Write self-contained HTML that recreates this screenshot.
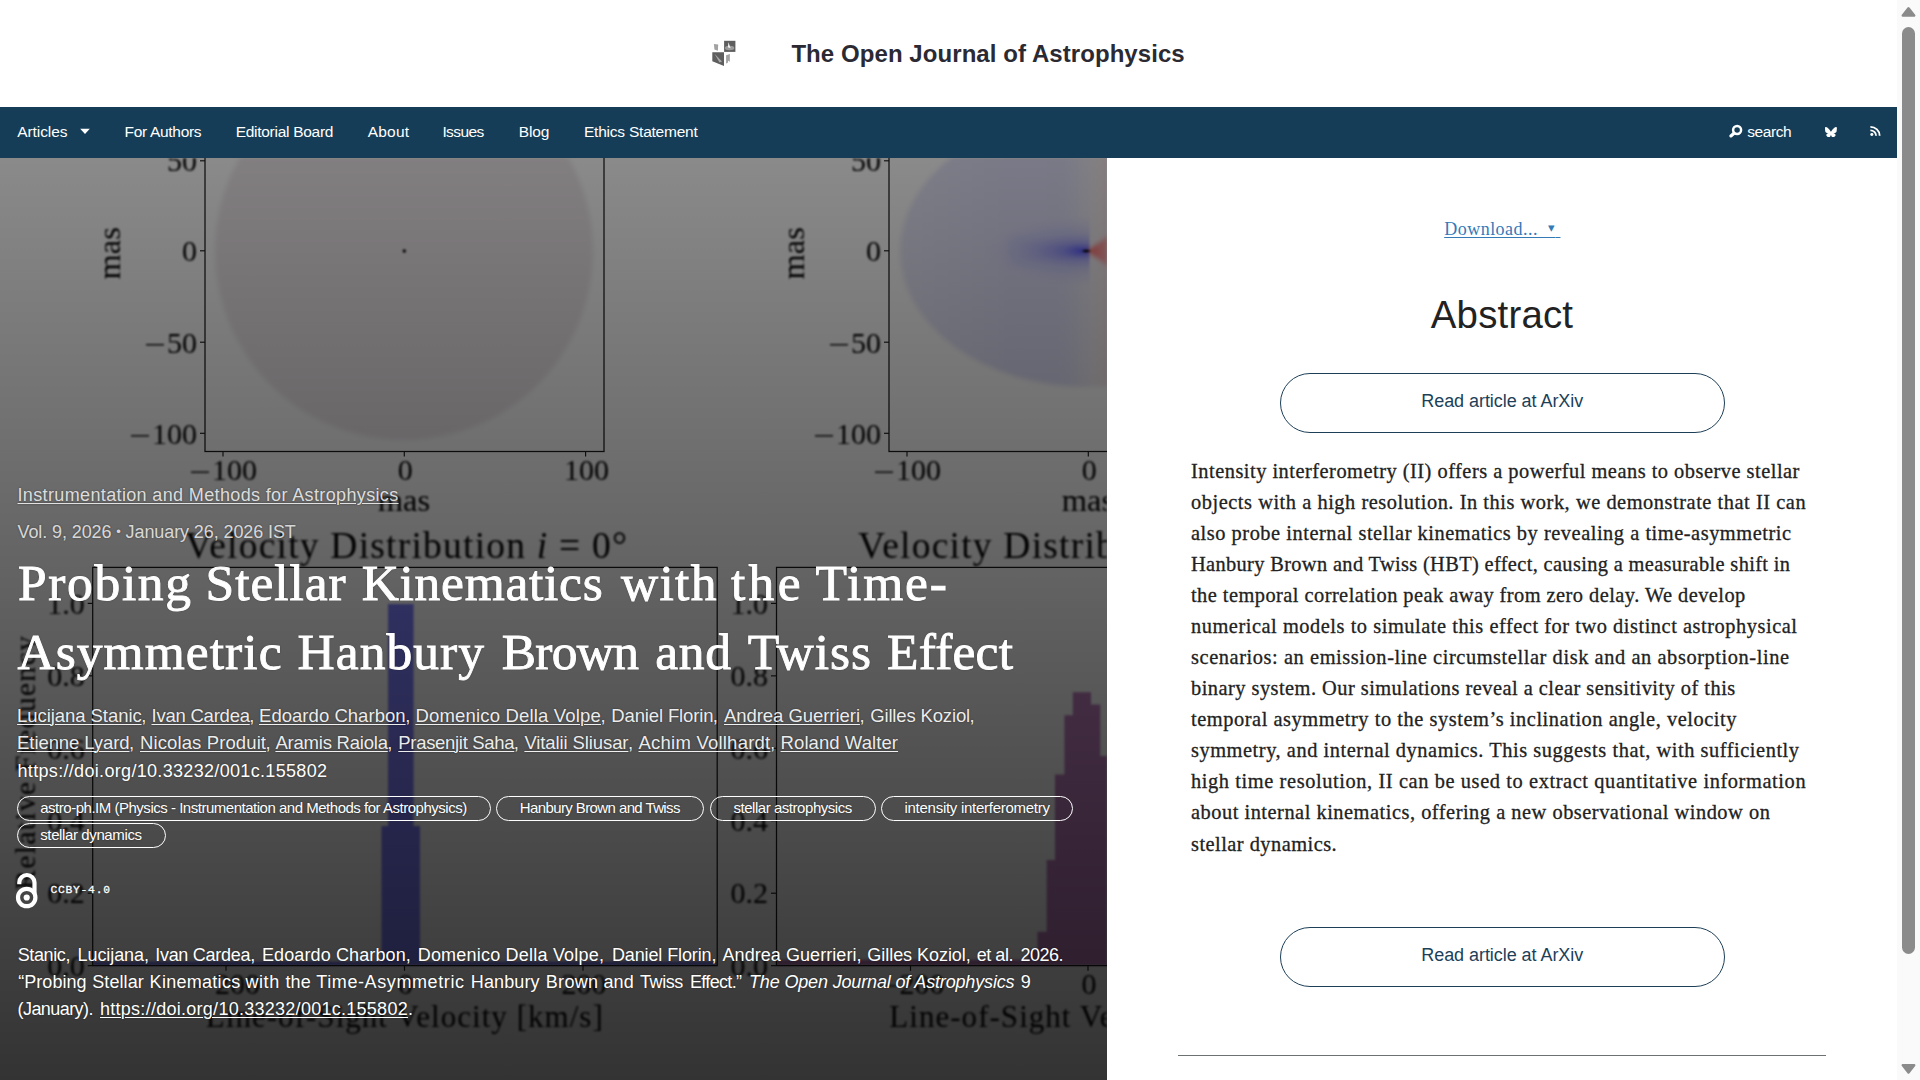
<!DOCTYPE html>
<html lang="en"><head><meta charset="utf-8"><title>Probing Stellar Kinematics with the Time-Asymmetric Hanbury Brown and Twiss Effect | The Open Journal of Astrophysics</title>
<style>
html,body{margin:0;padding:0;background:#fff;}
body{width:1920px;height:1080px;position:relative;overflow:hidden;font-family:'Liberation Sans',sans-serif;}
.t{position:absolute;white-space:nowrap;margin:0;padding:0;}
.sfx{position:absolute;left:100%;top:0;margin-left:-.5px}
.t u{text-decoration:underline;text-decoration-thickness:1px;text-underline-offset:2px;}
#nav{position:absolute;left:0;top:107px;width:1897px;height:51px;background:#153d57;}
#hero{position:absolute;left:0;top:158px;width:1107px;height:922px;overflow:hidden;background:#fff;}
#ov{position:absolute;left:0;top:0;width:1107px;height:922px;background:linear-gradient(to bottom,rgba(0,0,0,.46) 0%,rgba(0,0,0,.80) 100%);}
.pill{position:absolute;box-sizing:border-box;border:1px solid #fff;border-radius:13px;height:25px;}
.btn{position:absolute;box-sizing:border-box;border:1px solid #1d3f58;border-radius:30px;left:1280px;width:444.5px;height:60px;background:#fff;}
#sb{position:absolute;left:1897px;top:0;width:23px;height:1080px;background:#fafafa;}
#thumb{position:absolute;left:1902px;top:27px;width:13px;height:927px;border-radius:6.5px;background:#8b8b8b;}
#hr{position:absolute;left:1178px;top:1054.5px;width:648px;height:1px;background:#6c7272;}
</style></head><body>
<svg id="logo" style="position:absolute;left:700px;top:30px" width="50" height="45" viewBox="700 30 50 45">
<rect x="724.1" y="40.8" width="11.3" height="11.1" fill="#5e5e5e"/>
<ellipse cx="729.6" cy="48" rx="4.7" ry="2.2" fill="#9a9a9a"/>
<path d="M728.4 42.2 L730.6 48.2 L727.9 47.2 Z" fill="#f4f4f4"/>
<path d="M712.3 52.3 L724 52.3 L724 66 L712.3 61.2 Z" fill="#5e5e5e"/>
<path d="M714.5 53.8 L722 61.5 L719.5 62.6 Z" fill="#a8a8a8"/>
<path d="M713.9 43.9 L718.2 44.6 L717.9 50.8 L714.4 49.6 Z" fill="#a2a2a2"/>
<path d="M726.1 55.2 L729.9 54 L729.8 62 L728.4 60.5 L727.6 63 L726.1 63.6 Z" fill="#a2a2a2"/>
</svg>
<div id="nav"></div>
<svg style="position:absolute;left:79px;top:127px" width="12" height="8" viewBox="0 0 12 8"><path d="M1.2 1.7 L10.8 1.7 L6 7 Z" fill="#fff"/></svg>
<svg style="position:absolute;left:1727px;top:122px" width="18" height="18" viewBox="1727 122 18 18"><circle cx="1737.1" cy="130" r="4" fill="none" stroke="#fff" stroke-width="2.5"/><path d="M1734 133.3 L1730.9 135.9" stroke="#fff" stroke-width="3.2" stroke-linecap="round"/></svg>
<svg style="position:absolute;left:1824.9px;top:126.5px" width="11.9" height="10.4" viewBox="0 0 64 57" preserveAspectRatio="none"><path fill="#fff" d="M13.87 3.8C21.21 9.32 29.1 20.5 32 26.5c2.9-6 10.79-17.18 18.13-22.7C55.42-.17 64-3.25 64 6.55c0 1.96-1.12 16.44-1.78 18.79-2.28 8.17-10.61 10.25-18.02 8.99 12.95 2.2 16.25 9.5 9.13 16.81-13.51 13.87-19.42-3.48-20.94-7.92-.28-.82-.41-1.2-.41-.87 0-.33-.13.05-.41.87-1.52 4.44-7.43 21.79-20.94 7.92-7.12-7.31-3.82-14.61 9.13-16.81-7.41 1.26-15.74-.82-18.02-8.99C1.12 22.99 0 8.51 0 6.55 0-3.25 8.58-.17 13.87 3.8z"/></svg>
<svg style="position:absolute;left:1869.8px;top:126px" width="11.6" height="10.2" viewBox="0 0 12 11" preserveAspectRatio="none"><circle cx="1.9" cy="9.2" r="1.6" fill="#fff"/><path d="M0.4 4.6 A5.9 5.9 0 0 1 6.3 10.5" fill="none" stroke="#fff" stroke-width="1.9"/><path d="M0.4 1 A9.6 9.6 0 0 1 10 10.5" fill="none" stroke="#fff" stroke-width="1.9"/></svg>
<div id="hero">
<svg id="fig" width="1107" height="922" viewBox="0 158 1107 922" style="position:absolute;left:0;top:0;filter:blur(.8px)">
<defs>
<radialGradient id="gb" gradientUnits="userSpaceOnUse" cx="0" cy="0" r="100" gradientTransform="translate(1083 251) scale(1 .36)">
<stop offset="0" stop-color="#5a5aff"/><stop offset="0.07" stop-color="#6c6cff" stop-opacity=".9"/><stop offset="0.22" stop-color="#8888ff" stop-opacity=".6"/><stop offset="0.5" stop-color="#a0a0ff" stop-opacity=".3"/><stop offset="1" stop-color="#c0c0ff" stop-opacity="0"/>
</radialGradient>
<linearGradient id="gbase" gradientUnits="userSpaceOnUse" x1="900" y1="0" x2="1107" y2="0">
<stop offset="0" stop-color="#e9e9fb"/><stop offset="0.55" stop-color="#e0e0fa"/><stop offset="0.8" stop-color="#e1e1f9"/><stop offset="0.9" stop-color="#ebe9f4"/><stop offset="0.95" stop-color="#f2ecf0"/><stop offset="1" stop-color="#f4e4e8"/>
</linearGradient>
<radialGradient id="gr" gradientUnits="userSpaceOnUse" cx="0" cy="0" r="40" gradientTransform="translate(1097 251) scale(1 .5)">
<stop offset="0" stop-color="#ff6464"/><stop offset="0.3" stop-color="#ff8484" stop-opacity=".85"/><stop offset="0.65" stop-color="#ffa8a8" stop-opacity=".4"/><stop offset="1" stop-color="#ffd0d0" stop-opacity="0"/>
</radialGradient>
<clipPath id="cl"><rect x="889" y="100" width="230" height="352"/></clipPath>
<clipPath id="cb"><rect x="889" y="100" width="200.5" height="352"/></clipPath>
<clipPath id="cr"><rect x="1089.5" y="100" width="30" height="352"/></clipPath>
<linearGradient id="lgb" gradientUnits="userSpaceOnUse" x1="1089" y1="0" x2="990" y2="0">
<stop offset="0" stop-color="#4a4aff"/><stop offset="0.12" stop-color="#6464ff" stop-opacity=".95"/><stop offset="0.4" stop-color="#8484ff" stop-opacity=".6"/><stop offset="1" stop-color="#b4b4ff" stop-opacity="0"/>
</linearGradient>
<linearGradient id="lgr" gradientUnits="userSpaceOnUse" x1="1088" y1="0" x2="1112" y2="0">
<stop offset="0" stop-color="#ff6060"/><stop offset="0.5" stop-color="#ff8c8c" stop-opacity=".9"/><stop offset="1" stop-color="#ffb0b0" stop-opacity=".7"/>
</linearGradient>
<filter id="soft3" x="-30%" y="-60%" width="160%" height="220%"><feGaussianBlur stdDeviation="5"/></filter>
<filter id="soft2" x="-40%" y="-40%" width="180%" height="180%"><feGaussianBlur stdDeviation="2"/></filter>
<filter id="soft" x="-10%" y="-10%" width="120%" height="120%"><feGaussianBlur stdDeviation="2.2"/></filter>
</defs>
<rect x="0" y="158" width="1107" height="922" fill="#fff"/>
<circle cx="404" cy="251" r="189" fill="#f0eaee" filter="url(#soft)"/>
<g clip-path="url(#cl)"><ellipse cx="1088" cy="251" rx="188" ry="136" fill="url(#gbase)" filter="url(#soft)"/></g>
<g clip-path="url(#cb)"><ellipse cx="1088" cy="251" rx="188" ry="136" fill="url(#gb)"/></g>
<path d="M1090 251 L1010 236 L1010 266 Z" fill="url(#lgb)" filter="url(#soft3)" opacity=".45"/>
<path d="M1087 251 L1114 232 L1114 270 Z" fill="url(#lgr)" filter="url(#soft2)"/>
<path d="M1081.5 251 L1086 249.4 L1091.5 251 L1086 252.6 Z" fill="#000"/>
<circle cx="404.3" cy="251" r="1.7" fill="#000"/>
<text x="197.0" y="171.4" font-size="30" text-anchor="end" font-family="Liberation Serif, serif" fill="#000">50</text>
<text x="197.0" y="261.4" font-size="30" text-anchor="end" font-family="Liberation Serif, serif" fill="#000">0</text>
<text x="197.0" y="352.8" font-size="30" text-anchor="end" font-family="Liberation Serif, serif" fill="#000">50</text>
<line x1="146.0" y1="344.7" x2="164.0" y2="344.7" stroke="#000" stroke-width="1.4"/>
<text x="197.0" y="443.9" font-size="30" text-anchor="end" font-family="Liberation Serif, serif" fill="#000">100</text>
<line x1="131.0" y1="435.8" x2="149.0" y2="435.8" stroke="#000" stroke-width="1.4"/>
<text x="212.0" y="480.3" font-size="30" text-anchor="start" font-family="Liberation Serif, serif" fill="#000">100</text>
<line x1="191.0" y1="472.2" x2="209.0" y2="472.2" stroke="#000" stroke-width="1.4"/>
<text x="405.3" y="480.3" font-size="30" text-anchor="middle" font-family="Liberation Serif, serif" fill="#000">0</text>
<text x="586.6" y="480.3" font-size="30" text-anchor="middle" font-family="Liberation Serif, serif" fill="#000">100</text>
<text x="404" y="510.5" font-size="32.5" text-anchor="middle" font-family="Liberation Serif, serif" fill="#000">mas</text>
<text transform="translate(119.5 253.4) rotate(-90)" font-size="32.5" text-anchor="middle" font-family="Liberation Serif, serif" fill="#000">mas</text>
<text x="881.0" y="171.4" font-size="30" text-anchor="end" font-family="Liberation Serif, serif" fill="#000">50</text>
<text x="881.0" y="261.4" font-size="30" text-anchor="end" font-family="Liberation Serif, serif" fill="#000">0</text>
<text x="881.0" y="352.8" font-size="30" text-anchor="end" font-family="Liberation Serif, serif" fill="#000">50</text>
<line x1="830.0" y1="344.7" x2="848.0" y2="344.7" stroke="#000" stroke-width="1.4"/>
<text x="881.0" y="443.9" font-size="30" text-anchor="end" font-family="Liberation Serif, serif" fill="#000">100</text>
<line x1="815.0" y1="435.8" x2="833.0" y2="435.8" stroke="#000" stroke-width="1.4"/>
<text x="896.0" y="480.3" font-size="30" text-anchor="start" font-family="Liberation Serif, serif" fill="#000">100</text>
<line x1="875.0" y1="472.2" x2="893.0" y2="472.2" stroke="#000" stroke-width="1.4"/>
<text x="1089.3" y="480.3" font-size="30" text-anchor="middle" font-family="Liberation Serif, serif" fill="#000">0</text>
<text x="1270.6" y="480.3" font-size="30" text-anchor="middle" font-family="Liberation Serif, serif" fill="#000">100</text>
<text x="1088" y="510.5" font-size="32.5" text-anchor="middle" font-family="Liberation Serif, serif" fill="#000">mas</text>
<text transform="translate(803.5 253.4) rotate(-90)" font-size="32.5" text-anchor="middle" font-family="Liberation Serif, serif" fill="#000">mas</text>
<text x="185" y="558" font-size="37.5" textLength="442" lengthAdjust="spacing" font-family="Liberation Serif, serif" fill="#000">Velocity Distribution <tspan font-style="italic">i</tspan> = 0&#176;</text>
<text x="858" y="558" font-size="37.5" textLength="462" lengthAdjust="spacing" font-family="Liberation Serif, serif" fill="#000">Velocity Distribution <tspan font-style="italic">i</tspan> = 45&#176;</text>
<text x="84.8" y="613.6" font-size="30" text-anchor="end" font-family="Liberation Serif, serif" fill="#000">1.0</text>
<text x="84.8" y="686.1" font-size="30" text-anchor="end" font-family="Liberation Serif, serif" fill="#000">0.8</text>
<text x="84.8" y="758.5" font-size="30" text-anchor="end" font-family="Liberation Serif, serif" fill="#000">0.6</text>
<text x="84.8" y="831.0" font-size="30" text-anchor="end" font-family="Liberation Serif, serif" fill="#000">0.4</text>
<text x="84.8" y="903.4" font-size="30" text-anchor="end" font-family="Liberation Serif, serif" fill="#000">0.2</text>
<text x="84.8" y="975.9" font-size="30" text-anchor="end" font-family="Liberation Serif, serif" fill="#000">0.0</text>
<text x="215.0" y="994.0" font-size="30" text-anchor="start" font-family="Liberation Serif, serif" fill="#000">200</text>
<line x1="194.0" y1="985.9" x2="212.0" y2="985.9" stroke="#000" stroke-width="1.4"/>
<text x="405.5" y="994.0" font-size="30" text-anchor="middle" font-family="Liberation Serif, serif" fill="#000">0</text>
<text x="584.0" y="994.0" font-size="30" text-anchor="middle" font-family="Liberation Serif, serif" fill="#000">200</text>
<text x="768.1" y="613.6" font-size="30" text-anchor="end" font-family="Liberation Serif, serif" fill="#000">1.0</text>
<text x="768.1" y="686.1" font-size="30" text-anchor="end" font-family="Liberation Serif, serif" fill="#000">0.8</text>
<text x="768.1" y="758.5" font-size="30" text-anchor="end" font-family="Liberation Serif, serif" fill="#000">0.6</text>
<text x="768.1" y="831.0" font-size="30" text-anchor="end" font-family="Liberation Serif, serif" fill="#000">0.4</text>
<text x="768.1" y="903.4" font-size="30" text-anchor="end" font-family="Liberation Serif, serif" fill="#000">0.2</text>
<text x="768.1" y="975.9" font-size="30" text-anchor="end" font-family="Liberation Serif, serif" fill="#000">0.0</text>
<text x="899.5" y="994.0" font-size="30" text-anchor="start" font-family="Liberation Serif, serif" fill="#000">200</text>
<line x1="878.5" y1="985.9" x2="896.5" y2="985.9" stroke="#000" stroke-width="1.4"/>
<text x="1089.0" y="994.0" font-size="30" text-anchor="middle" font-family="Liberation Serif, serif" fill="#000">0</text>
<text x="205.8" y="1027" font-size="31" textLength="397" lengthAdjust="spacing" font-family="Liberation Serif, serif" fill="#000">Line-of-Sight Velocity [km/s]</text>
<text x="889.3" y="1027" font-size="31" textLength="397" lengthAdjust="spacing" font-family="Liberation Serif, serif" fill="#000">Line-of-Sight Velocity [km/s]</text>
<text transform="translate(34.6 763) rotate(-90)" font-size="30" text-anchor="middle" textLength="254" lengthAdjust="spacing" font-family="Liberation Serif, serif" fill="#000">Relative Frequency</text>
<path d="M92.7 961.6 L381.5 961.6 L381.5 826 L388 826 L388 604 L413.6 604 L413.6 826 L420 826 L420 961.6 L717 961.6 L717 965.4 L92.7 965.4 Z" fill="#7f7fff"/>
<path d="M776.5 959.8 L1028 959.8 L1028 949.5 L1037.5 949.5 L1037.5 931.7 L1046.7 931.7 L1046.7 860 L1055 860 L1055 774.5 L1064.4 774.5 L1064.4 715.2 L1072.8 715.2 L1072.8 692.2 L1091 692.2 L1091 704.4 L1100.3 704.4 L1100.3 756 L1110 756 L1110 965.6 L776.5 965.6 Z" fill="#bf7fbf"/>
</svg>
<svg id="figl" width="1107" height="922" viewBox="0 158 1107 922" style="position:absolute;left:0;top:0;filter:blur(.35px)">
<rect x="205" y="60" width="399" height="391.5" fill="none" stroke="#1c1c1c" stroke-width="1.25"/>
<rect x="889" y="60" width="399" height="391.5" fill="none" stroke="#1c1c1c" stroke-width="1.25"/>
<rect x="92.7" y="567.4" width="624.5" height="398.2" fill="none" stroke="#1c1c1c" stroke-width="1.25"/>
<rect x="776.5" y="567.4" width="624" height="398.2" fill="none" stroke="#1c1c1c" stroke-width="1.25"/>
<line x1="200" y1="160.8" x2="205" y2="160.8" stroke="#1c1c1c" stroke-width="1.15"/>
<line x1="200" y1="250.8" x2="205" y2="250.8" stroke="#1c1c1c" stroke-width="1.15"/>
<line x1="200" y1="342.2" x2="205" y2="342.2" stroke="#1c1c1c" stroke-width="1.15"/>
<line x1="200" y1="433.3" x2="205" y2="433.3" stroke="#1c1c1c" stroke-width="1.15"/>
<line x1="223" y1="451.5" x2="223" y2="456.5" stroke="#1c1c1c" stroke-width="1.15"/>
<line x1="404.3" y1="451.5" x2="404.3" y2="456.5" stroke="#1c1c1c" stroke-width="1.15"/>
<line x1="585.6" y1="451.5" x2="585.6" y2="456.5" stroke="#1c1c1c" stroke-width="1.15"/>
<line x1="884" y1="160.8" x2="889" y2="160.8" stroke="#1c1c1c" stroke-width="1.15"/>
<line x1="884" y1="250.8" x2="889" y2="250.8" stroke="#1c1c1c" stroke-width="1.15"/>
<line x1="884" y1="342.2" x2="889" y2="342.2" stroke="#1c1c1c" stroke-width="1.15"/>
<line x1="884" y1="433.3" x2="889" y2="433.3" stroke="#1c1c1c" stroke-width="1.15"/>
<line x1="907" y1="451.5" x2="907" y2="456.5" stroke="#1c1c1c" stroke-width="1.15"/>
<line x1="1088.3" y1="451.5" x2="1088.3" y2="456.5" stroke="#1c1c1c" stroke-width="1.15"/>
<line x1="1269.6" y1="451.5" x2="1269.6" y2="456.5" stroke="#1c1c1c" stroke-width="1.15"/>
<line x1="87.7" y1="603.4" x2="92.7" y2="603.4" stroke="#1c1c1c" stroke-width="1.15"/>
<line x1="87.7" y1="675.85" x2="92.7" y2="675.85" stroke="#1c1c1c" stroke-width="1.15"/>
<line x1="87.7" y1="748.3" x2="92.7" y2="748.3" stroke="#1c1c1c" stroke-width="1.15"/>
<line x1="87.7" y1="820.75" x2="92.7" y2="820.75" stroke="#1c1c1c" stroke-width="1.15"/>
<line x1="87.7" y1="893.2" x2="92.7" y2="893.2" stroke="#1c1c1c" stroke-width="1.15"/>
<line x1="87.7" y1="965.65" x2="92.7" y2="965.65" stroke="#1c1c1c" stroke-width="1.15"/>
<line x1="226" y1="965.6" x2="226" y2="970.8" stroke="#1c1c1c" stroke-width="1.15"/>
<line x1="404.5" y1="965.6" x2="404.5" y2="970.8" stroke="#1c1c1c" stroke-width="1.15"/>
<line x1="583" y1="965.6" x2="583" y2="970.8" stroke="#1c1c1c" stroke-width="1.15"/>
<line x1="771.0" y1="603.4" x2="776.0" y2="603.4" stroke="#1c1c1c" stroke-width="1.15"/>
<line x1="771.0" y1="675.85" x2="776.0" y2="675.85" stroke="#1c1c1c" stroke-width="1.15"/>
<line x1="771.0" y1="748.3" x2="776.0" y2="748.3" stroke="#1c1c1c" stroke-width="1.15"/>
<line x1="771.0" y1="820.75" x2="776.0" y2="820.75" stroke="#1c1c1c" stroke-width="1.15"/>
<line x1="771.0" y1="893.2" x2="776.0" y2="893.2" stroke="#1c1c1c" stroke-width="1.15"/>
<line x1="771.0" y1="965.65" x2="776.0" y2="965.65" stroke="#1c1c1c" stroke-width="1.15"/>
<line x1="910.5" y1="965.6" x2="910.5" y2="970.8" stroke="#1c1c1c" stroke-width="1.15"/>
<line x1="1088" y1="965.6" x2="1088" y2="970.8" stroke="#1c1c1c" stroke-width="1.15"/>
</svg>
<div id="ov"></div>
</div>
<div class="pill" style="left:17px;top:796px;width:473.9px"></div>
<div class="pill" style="left:495.7px;top:796px;width:208.3px"></div>
<div class="pill" style="left:709.9px;top:796px;width:165.9px"></div>
<div class="pill" style="left:881px;top:796px;width:191.7px"></div>
<div class="pill" style="left:17px;top:823.2px;width:148.7px"></div>
<svg style="position:absolute;left:12px;top:868px" width="30" height="44" viewBox="12 868 30 44"><g fill="none" stroke="#fff" stroke-width="4.2"><circle cx="26.7" cy="897.5" r="8.7"/><path d="M19.3 884.3 L19.3 882.6 A7.6 7.6 0 0 1 34.5 882.6 L34.5 893.5"/></g><circle cx="26.7" cy="897.5" r="3.1" fill="#fff"/></svg>
<div class="btn" style="top:373px"></div><div class="btn" style="top:927px"></div>
<div id="hr"></div>
<div id="sb"></div><div id="thumb"></div>
<svg style="position:absolute;left:1897px;top:0" width="23" height="24" viewBox="1897 0 23 24"><path d="M1908.5 8.4 L1914.2 15.5 L1902.8 15.5 Z" fill="#8b8b8b" stroke="#8b8b8b" stroke-width="2.5" stroke-linejoin="round"/></svg>
<svg style="position:absolute;left:1897px;top:1056px" width="23" height="24" viewBox="1897 1056 23 24"><path d="M1908.5 1072.5 L1914.2 1065.3 L1902.8 1065.3 Z" fill="#8b8b8b" stroke="#8b8b8b" stroke-width="2.5" stroke-linejoin="round"/></svg>
<div class="t" id="title" style="left:791.40px;top:37.78px;font-family:'Liberation Sans', sans-serif;font-size:24px;line-height:31.2px;color:#2b2a33;font-weight:bold;letter-spacing:0.069px;">The Open Journal of Astrophysics</div>
<div class="t" id="nav0" style="left:17.25px;top:121.75px;font-family:'Liberation Sans', sans-serif;font-size:15.5px;line-height:20.15px;color:#fff;letter-spacing:-0.083px;">Articles</div>
<div class="t" id="nav1" style="left:124.50px;top:121.75px;font-family:'Liberation Sans', sans-serif;font-size:15.5px;line-height:20.15px;color:#fff;letter-spacing:-0.303px;">For Authors</div>
<div class="t" id="nav2" style="left:235.70px;top:121.75px;font-family:'Liberation Sans', sans-serif;font-size:15.5px;line-height:20.15px;color:#fff;letter-spacing:-0.284px;">Editorial Board</div>
<div class="t" id="nav3" style="left:367.80px;top:121.75px;font-family:'Liberation Sans', sans-serif;font-size:15.5px;line-height:20.15px;color:#fff;letter-spacing:0.171px;">About</div>
<div class="t" id="nav4" style="left:442.40px;top:121.75px;font-family:'Liberation Sans', sans-serif;font-size:15.5px;line-height:20.15px;color:#fff;letter-spacing:-0.582px;">Issues</div>
<div class="t" id="nav5" style="left:518.75px;top:121.75px;font-family:'Liberation Sans', sans-serif;font-size:15.5px;line-height:20.15px;color:#fff;letter-spacing:-0.160px;">Blog</div>
<div class="t" id="nav6" style="left:584.00px;top:121.75px;font-family:'Liberation Sans', sans-serif;font-size:15.5px;line-height:20.15px;color:#fff;letter-spacing:-0.225px;">Ethics Statement</div>
<div class="t" id="navs" style="left:1747.20px;top:122.45px;font-family:'Liberation Sans', sans-serif;font-size:15.5px;line-height:20.15px;color:#fff;letter-spacing:-0.406px;">search</div>
<div class="t" id="cat" style="left:17.50px;top:483.96px;font-family:'Liberation Sans', sans-serif;font-size:18px;line-height:23.4px;color:rgba(255,255,255,.82);letter-spacing:0.361px;text-shadow:0 0 2px rgba(0,0,0,.45);"><u>Instrumentation and Methods for Astrophysics</u></div>
<div class="t" id="vol" style="left:17.50px;top:520.06px;font-family:'Liberation Sans', sans-serif;font-size:18px;line-height:23.4px;color:rgba(255,255,255,.8);letter-spacing:-0.101px;text-shadow:0 0 2px rgba(0,0,0,.45);">Vol. 9, 2026 <span style="font-size:.72em;vertical-align:.12em">&bull;</span> January 26, 2026 IST</div>
<div class="t" id="h1a_0" style="left:18.00px;top:550.14px;font-family:'Liberation Serif', serif;font-size:51.5px;line-height:66.95px;color:#fff;letter-spacing:1.648px;text-shadow:0 0 2px rgba(0,0,0,.45);-webkit-text-stroke:.9px #fff;">Probing</div>
<div class="t" id="h1a_1" style="left:205.60px;top:550.14px;font-family:'Liberation Serif', serif;font-size:51.5px;line-height:66.95px;color:#fff;letter-spacing:0.927px;text-shadow:0 0 2px rgba(0,0,0,.45);-webkit-text-stroke:.9px #fff;">Stellar</div>
<div class="t" id="h1a_2" style="left:361.70px;top:550.14px;font-family:'Liberation Serif', serif;font-size:51.5px;line-height:66.95px;color:#fff;letter-spacing:0.717px;text-shadow:0 0 2px rgba(0,0,0,.45);-webkit-text-stroke:.9px #fff;">Kinematics</div>
<div class="t" id="h1a_3" style="left:621.00px;top:550.14px;font-family:'Liberation Serif', serif;font-size:51.5px;line-height:66.95px;color:#fff;letter-spacing:1.312px;text-shadow:0 0 2px rgba(0,0,0,.45);-webkit-text-stroke:.9px #fff;">with</div>
<div class="t" id="h1a_4" style="left:731.00px;top:550.14px;font-family:'Liberation Serif', serif;font-size:51.5px;line-height:66.95px;color:#fff;letter-spacing:3.289px;text-shadow:0 0 2px rgba(0,0,0,.45);-webkit-text-stroke:.9px #fff;">the</div>
<div class="t" id="h1a_5" style="left:815.60px;top:550.14px;font-family:'Liberation Serif', serif;font-size:51.5px;line-height:66.95px;color:#fff;letter-spacing:1.817px;text-shadow:0 0 2px rgba(0,0,0,.45);-webkit-text-stroke:.9px #fff;">Time-</div>
<div class="t" id="h1b_0" style="left:17.50px;top:618.64px;font-family:'Liberation Serif', serif;font-size:51.5px;line-height:66.95px;color:#fff;letter-spacing:1.045px;text-shadow:0 0 2px rgba(0,0,0,.45);-webkit-text-stroke:.9px #fff;">Asymmetric</div>
<div class="t" id="h1b_1" style="left:297.50px;top:618.64px;font-family:'Liberation Serif', serif;font-size:51.5px;line-height:66.95px;color:#fff;letter-spacing:1.049px;text-shadow:0 0 2px rgba(0,0,0,.45);-webkit-text-stroke:.9px #fff;">Hanbury</div>
<div class="t" id="h1b_2" style="left:501.70px;top:618.64px;font-family:'Liberation Serif', serif;font-size:51.5px;line-height:66.95px;color:#fff;letter-spacing:-0.726px;text-shadow:0 0 2px rgba(0,0,0,.45);-webkit-text-stroke:.9px #fff;">Brown</div>
<div class="t" id="h1b_3" style="left:655.20px;top:618.64px;font-family:'Liberation Serif', serif;font-size:51.5px;line-height:66.95px;color:#fff;letter-spacing:0.720px;text-shadow:0 0 2px rgba(0,0,0,.45);-webkit-text-stroke:.9px #fff;">and</div>
<div class="t" id="h1b_4" style="left:747.70px;top:618.64px;font-family:'Liberation Serif', serif;font-size:51.5px;line-height:66.95px;color:#fff;letter-spacing:0.962px;text-shadow:0 0 2px rgba(0,0,0,.45);-webkit-text-stroke:.9px #fff;">Twiss</div>
<div class="t" id="h1b_5" style="left:887.00px;top:618.64px;font-family:'Liberation Serif', serif;font-size:51.5px;line-height:66.95px;color:#fff;letter-spacing:0.228px;text-shadow:0 0 2px rgba(0,0,0,.45);-webkit-text-stroke:.9px #fff;">Effect</div>
<div class="t" id="au1_0" style="left:17.10px;top:703.56px;font-family:'Liberation Sans', sans-serif;font-size:18.5px;line-height:24.05px;color:rgba(255,255,255,.92);letter-spacing:-0.063px;text-shadow:0 0 2px rgba(0,0,0,.45);"><span class="m"><u>Lucijana Stanic</u></span><span class="sfx">,</span></div>
<div class="t" id="au1_1" style="left:151.50px;top:703.56px;font-family:'Liberation Sans', sans-serif;font-size:18.5px;line-height:24.05px;color:rgba(255,255,255,.92);letter-spacing:-0.230px;text-shadow:0 0 2px rgba(0,0,0,.45);"><span class="m"><u>Ivan Cardea</u></span><span class="sfx">,</span></div>
<div class="t" id="au1_2" style="left:259.00px;top:703.56px;font-family:'Liberation Sans', sans-serif;font-size:18.5px;line-height:24.05px;color:rgba(255,255,255,.92);letter-spacing:0.038px;text-shadow:0 0 2px rgba(0,0,0,.45);"><span class="m"><u>Edoardo Charbon</u></span><span class="sfx">,</span></div>
<div class="t" id="au1_3" style="left:415.40px;top:703.56px;font-family:'Liberation Sans', sans-serif;font-size:18.5px;line-height:24.05px;color:rgba(255,255,255,.92);letter-spacing:0.177px;text-shadow:0 0 2px rgba(0,0,0,.45);"><span class="m"><u>Domenico Della Volpe</u></span><span class="sfx">,</span></div>
<div class="t" id="au1_4" style="left:611.25px;top:703.56px;font-family:'Liberation Sans', sans-serif;font-size:18.5px;line-height:24.05px;color:rgba(255,255,255,.92);letter-spacing:-0.134px;text-shadow:0 0 2px rgba(0,0,0,.45);"><span class="m">Daniel Florin</span><span class="sfx">,</span></div>
<div class="t" id="au1_5" style="left:724.00px;top:703.56px;font-family:'Liberation Sans', sans-serif;font-size:18.5px;line-height:24.05px;color:rgba(255,255,255,.92);letter-spacing:-0.051px;text-shadow:0 0 2px rgba(0,0,0,.45);"><span class="m"><u>Andrea Guerrieri</u></span><span class="sfx">,</span></div>
<div class="t" id="au1_6" style="left:870.20px;top:703.56px;font-family:'Liberation Sans', sans-serif;font-size:18.5px;line-height:24.05px;color:rgba(255,255,255,.92);letter-spacing:-0.150px;text-shadow:0 0 2px rgba(0,0,0,.45);"><span class="m">Gilles Koziol</span><span class="sfx">,</span></div>
<div class="t" id="au2_0" style="left:17.10px;top:730.56px;font-family:'Liberation Sans', sans-serif;font-size:18.5px;line-height:24.05px;color:rgba(255,255,255,.92);letter-spacing:-0.082px;text-shadow:0 0 2px rgba(0,0,0,.45);"><span class="m"><u>Etienne Lyard</u></span><span class="sfx">,</span></div>
<div class="t" id="au2_1" style="left:140.00px;top:730.56px;font-family:'Liberation Sans', sans-serif;font-size:18.5px;line-height:24.05px;color:rgba(255,255,255,.92);letter-spacing:0.113px;text-shadow:0 0 2px rgba(0,0,0,.45);"><span class="m"><u>Nicolas Produit</u></span><span class="sfx">,</span></div>
<div class="t" id="au2_2" style="left:275.40px;top:730.56px;font-family:'Liberation Sans', sans-serif;font-size:18.5px;line-height:24.05px;color:rgba(255,255,255,.92);letter-spacing:-0.213px;text-shadow:0 0 2px rgba(0,0,0,.45);"><span class="m"><u>Aramis Raiola</u></span><span class="sfx">,</span></div>
<div class="t" id="au2_3" style="left:398.30px;top:730.56px;font-family:'Liberation Sans', sans-serif;font-size:18.5px;line-height:24.05px;color:rgba(255,255,255,.92);letter-spacing:-0.310px;text-shadow:0 0 2px rgba(0,0,0,.45);"><span class="m"><u>Prasenjit Saha</u></span><span class="sfx">,</span></div>
<div class="t" id="au2_4" style="left:524.40px;top:730.56px;font-family:'Liberation Sans', sans-serif;font-size:18.5px;line-height:24.05px;color:rgba(255,255,255,.92);letter-spacing:-0.104px;text-shadow:0 0 2px rgba(0,0,0,.45);"><span class="m"><u>Vitalii Sliusar</u></span><span class="sfx">,</span></div>
<div class="t" id="au2_5" style="left:638.50px;top:730.56px;font-family:'Liberation Sans', sans-serif;font-size:18.5px;line-height:24.05px;color:rgba(255,255,255,.92);letter-spacing:0.225px;text-shadow:0 0 2px rgba(0,0,0,.45);"><span class="m"><u>Achim Vollhardt</u></span><span class="sfx">,</span></div>
<div class="t" id="au2_6" style="left:780.60px;top:730.56px;font-family:'Liberation Sans', sans-serif;font-size:18.5px;line-height:24.05px;color:rgba(255,255,255,.92);letter-spacing:0.072px;text-shadow:0 0 2px rgba(0,0,0,.45);"><span class="m"><u>Roland Walter</u></span></div>
<div class="t" id="doi" style="left:17.50px;top:759.66px;font-family:'Liberation Sans', sans-serif;font-size:18px;line-height:23.4px;color:#fff;letter-spacing:0.321px;text-shadow:0 0 2px rgba(0,0,0,.45);">https://doi.org/10.33232/001c.155802</div>
<div class="t" id="tg1" style="left:40.25px;top:798.35px;font-family:'Liberation Sans', sans-serif;font-size:15px;line-height:19.5px;color:#fff;letter-spacing:-0.484px;text-shadow:0 0 2px rgba(0,0,0,.45);">astro-ph.IM (Physics - Instrumentation and Methods for Astrophysics)</div>
<div class="t" id="tg2" style="left:519.80px;top:798.35px;font-family:'Liberation Sans', sans-serif;font-size:15px;line-height:19.5px;color:#fff;letter-spacing:-0.604px;text-shadow:0 0 2px rgba(0,0,0,.45);">Hanbury Brown and Twiss</div>
<div class="t" id="tg3" style="left:733.40px;top:798.35px;font-family:'Liberation Sans', sans-serif;font-size:15px;line-height:19.5px;color:#fff;letter-spacing:-0.455px;text-shadow:0 0 2px rgba(0,0,0,.45);">stellar astrophysics</div>
<div class="t" id="tg4" style="left:904.50px;top:798.35px;font-family:'Liberation Sans', sans-serif;font-size:15px;line-height:19.5px;color:#fff;letter-spacing:-0.275px;text-shadow:0 0 2px rgba(0,0,0,.45);">intensity interferometry</div>
<div class="t" id="tg5" style="left:40.25px;top:825.45px;font-family:'Liberation Sans', sans-serif;font-size:15px;line-height:19.5px;color:#fff;letter-spacing:-0.386px;text-shadow:0 0 2px rgba(0,0,0,.45);">stellar dynamics</div>
<div class="t" id="cc" style="left:50.40px;top:883.39px;font-family:'Liberation Mono', monospace;font-size:11.3px;line-height:14.69px;color:#fff;letter-spacing:0.767px;text-shadow:0 0 2px rgba(0,0,0,.45);-webkit-text-stroke:.3px #fff;">CCBY-4.0</div>
<div class="t" id="ci1_0" style="left:17.70px;top:943.86px;font-family:'Liberation Sans', sans-serif;font-size:18px;line-height:23.4px;color:#fff;letter-spacing:-0.389px;text-shadow:0 0 2px rgba(0,0,0,.45);"><span class="m">Stanic,</span></div>
<div class="t" id="ci1_1" style="left:77.50px;top:943.86px;font-family:'Liberation Sans', sans-serif;font-size:18px;line-height:23.4px;color:#fff;letter-spacing:-0.070px;text-shadow:0 0 2px rgba(0,0,0,.45);"><span class="m">Lucijana,</span></div>
<div class="t" id="ci1_2" style="left:155.20px;top:943.86px;font-family:'Liberation Sans', sans-serif;font-size:18px;line-height:23.4px;color:#fff;letter-spacing:-0.278px;text-shadow:0 0 2px rgba(0,0,0,.45);"><span class="m">Ivan Cardea,</span></div>
<div class="t" id="ci1_3" style="left:262.00px;top:943.86px;font-family:'Liberation Sans', sans-serif;font-size:18px;line-height:23.4px;color:#fff;letter-spacing:0.113px;text-shadow:0 0 2px rgba(0,0,0,.45);"><span class="m">Edoardo Charbon,</span></div>
<div class="t" id="ci1_4" style="left:417.70px;top:943.86px;font-family:'Liberation Sans', sans-serif;font-size:18px;line-height:23.4px;color:#fff;letter-spacing:0.210px;text-shadow:0 0 2px rgba(0,0,0,.45);"><span class="m">Domenico Della Volpe,</span></div>
<div class="t" id="ci1_5" style="left:611.90px;top:943.86px;font-family:'Liberation Sans', sans-serif;font-size:18px;line-height:23.4px;color:#fff;letter-spacing:-0.111px;text-shadow:0 0 2px rgba(0,0,0,.45);"><span class="m">Daniel Florin,</span></div>
<div class="t" id="ci1_6" style="left:722.50px;top:943.86px;font-family:'Liberation Sans', sans-serif;font-size:18px;line-height:23.4px;color:#fff;letter-spacing:0.059px;text-shadow:0 0 2px rgba(0,0,0,.45);"><span class="m">Andrea Guerrieri,</span></div>
<div class="t" id="ci1_7" style="left:867.30px;top:943.86px;font-family:'Liberation Sans', sans-serif;font-size:18px;line-height:23.4px;color:#fff;letter-spacing:-0.042px;text-shadow:0 0 2px rgba(0,0,0,.45);"><span class="m">Gilles Koziol,</span></div>
<div class="t" id="ci1_8" style="left:976.70px;top:943.86px;font-family:'Liberation Sans', sans-serif;font-size:18px;line-height:23.4px;color:#fff;letter-spacing:-0.446px;text-shadow:0 0 2px rgba(0,0,0,.45);"><span class="m">et al.</span></div>
<div class="t" id="ci1_9" style="left:1020.40px;top:943.86px;font-family:'Liberation Sans', sans-serif;font-size:18px;line-height:23.4px;color:#fff;letter-spacing:-0.487px;text-shadow:0 0 2px rgba(0,0,0,.45);"><span class="m">2026.</span></div>
<div class="t" id="ci2_0" style="left:18.30px;top:971.06px;font-family:'Liberation Sans', sans-serif;font-size:18px;line-height:23.4px;color:#fff;letter-spacing:0.022px;text-shadow:0 0 2px rgba(0,0,0,.45);"><span class="m">&ldquo;Probing</span></div>
<div class="t" id="ci2_1" style="left:92.30px;top:971.06px;font-family:'Liberation Sans', sans-serif;font-size:18px;line-height:23.4px;color:#fff;letter-spacing:0.070px;text-shadow:0 0 2px rgba(0,0,0,.45);"><span class="m">Stellar</span></div>
<div class="t" id="ci2_2" style="left:149.60px;top:971.06px;font-family:'Liberation Sans', sans-serif;font-size:18px;line-height:23.4px;color:#fff;letter-spacing:0.285px;text-shadow:0 0 2px rgba(0,0,0,.45);"><span class="m">Kinematics</span></div>
<div class="t" id="ci2_3" style="left:245.40px;top:971.06px;font-family:'Liberation Sans', sans-serif;font-size:18px;line-height:23.4px;color:#fff;letter-spacing:0.595px;text-shadow:0 0 2px rgba(0,0,0,.45);"><span class="m">with</span></div>
<div class="t" id="ci2_4" style="left:285.40px;top:971.06px;font-family:'Liberation Sans', sans-serif;font-size:18px;line-height:23.4px;color:#fff;letter-spacing:0.184px;text-shadow:0 0 2px rgba(0,0,0,.45);"><span class="m">the</span></div>
<div class="t" id="ci2_5" style="left:316.25px;top:971.06px;font-family:'Liberation Sans', sans-serif;font-size:18px;line-height:23.4px;color:#fff;letter-spacing:0.602px;text-shadow:0 0 2px rgba(0,0,0,.45);"><span class="m">Time-Asymmetric</span></div>
<div class="t" id="ci2_6" style="left:470.80px;top:971.06px;font-family:'Liberation Sans', sans-serif;font-size:18px;line-height:23.4px;color:#fff;letter-spacing:0.126px;text-shadow:0 0 2px rgba(0,0,0,.45);"><span class="m">Hanbury</span></div>
<div class="t" id="ci2_7" style="left:545.80px;top:971.06px;font-family:'Liberation Sans', sans-serif;font-size:18px;line-height:23.4px;color:#fff;letter-spacing:0.292px;text-shadow:0 0 2px rgba(0,0,0,.45);"><span class="m">Brown</span></div>
<div class="t" id="ci2_8" style="left:603.50px;top:971.06px;font-family:'Liberation Sans', sans-serif;font-size:18px;line-height:23.4px;color:#fff;letter-spacing:0.102px;text-shadow:0 0 2px rgba(0,0,0,.45);"><span class="m">and</span></div>
<div class="t" id="ci2_9" style="left:640.00px;top:971.06px;font-family:'Liberation Sans', sans-serif;font-size:18px;line-height:23.4px;color:#fff;letter-spacing:-0.425px;text-shadow:0 0 2px rgba(0,0,0,.45);"><span class="m">Twiss</span></div>
<div class="t" id="ci2_10" style="left:690.00px;top:971.06px;font-family:'Liberation Sans', sans-serif;font-size:18px;line-height:23.4px;color:#fff;letter-spacing:-0.672px;text-shadow:0 0 2px rgba(0,0,0,.45);"><span class="m">Effect.&rdquo;</span></div>
<div class="t" id="ci2_11" style="left:749.00px;top:971.06px;font-family:'Liberation Sans', sans-serif;font-size:18px;line-height:23.4px;color:#fff;letter-spacing:-0.157px;text-shadow:0 0 2px rgba(0,0,0,.45);"><span class="m"><i>The Open Journal of Astrophysics</i></span></div>
<div class="t" id="ci2_12" style="left:1020.80px;top:971.06px;font-family:'Liberation Sans', sans-serif;font-size:18px;line-height:23.4px;color:#fff;text-shadow:0 0 2px rgba(0,0,0,.45);"><span class="m">9</span></div>
<div class="t" id="ci3" style="left:17.50px;top:997.86px;font-family:'Liberation Sans', sans-serif;font-size:18px;line-height:23.4px;color:#fff;letter-spacing:-0.559px;text-shadow:0 0 2px rgba(0,0,0,.45);">(January).</div>
<div class="t" id="ci3b" style="left:100.00px;top:997.86px;font-family:'Liberation Sans', sans-serif;font-size:18px;line-height:23.4px;color:#fff;letter-spacing:0.270px;text-shadow:0 0 2px rgba(0,0,0,.45);"><u>https://doi.org/10.33232/001c.155802</u>.</div>
<div class="t" id="dl" style="left:1444.20px;top:217.62px;font-family:'Liberation Serif', serif;font-size:18px;line-height:23.4px;color:#337ab7;letter-spacing:0.486px;"><u>Download...&nbsp;&nbsp;<span style="font-size:12.5px;vertical-align:2.6px">&#9662;</span>&nbsp;</u></div>
<div class="t" id="abs" style="left:1430.80px;top:290.23px;font-family:'Liberation Sans', sans-serif;font-size:38.4px;line-height:49.92px;color:#222;letter-spacing:0.196px;">Abstract</div>
<div class="t" id="b1" style="left:1421.25px;top:390.06px;font-family:'Liberation Sans', sans-serif;font-size:18px;line-height:23.4px;color:#1d3f58;letter-spacing:-0.054px;">Read article at ArXiv</div>
<div class="t" id="b2" style="left:1421.25px;top:944.06px;font-family:'Liberation Sans', sans-serif;font-size:18px;line-height:23.4px;color:#1d3f58;letter-spacing:-0.054px;">Read article at ArXiv</div>
<div class="t" id="ab0" style="left:1191.00px;top:457.66px;font-family:'Liberation Serif', serif;font-size:20.4px;line-height:26.52px;color:#222;letter-spacing:0.496px;-webkit-text-stroke:.3px #222;">Intensity interferometry (II) offers a powerful means to observe stellar</div>
<div class="t" id="ab1" style="left:1191.00px;top:488.73px;font-family:'Liberation Serif', serif;font-size:20.4px;line-height:26.52px;color:#222;letter-spacing:0.537px;-webkit-text-stroke:.3px #222;">objects with a high resolution. In this work, we demonstrate that II can</div>
<div class="t" id="ab2" style="left:1191.00px;top:519.81px;font-family:'Liberation Serif', serif;font-size:20.4px;line-height:26.52px;color:#222;letter-spacing:0.530px;-webkit-text-stroke:.3px #222;">also probe internal stellar kinematics by revealing a time-asymmetric</div>
<div class="t" id="ab3" style="left:1191.00px;top:550.88px;font-family:'Liberation Serif', serif;font-size:20.4px;line-height:26.52px;color:#222;letter-spacing:0.349px;-webkit-text-stroke:.3px #222;">Hanbury Brown and Twiss (HBT) effect, causing a measurable shift in</div>
<div class="t" id="ab4" style="left:1191.00px;top:581.96px;font-family:'Liberation Serif', serif;font-size:20.4px;line-height:26.52px;color:#222;letter-spacing:0.454px;-webkit-text-stroke:.3px #222;">the temporal correlation peak away from zero delay. We develop</div>
<div class="t" id="ab5" style="left:1191.00px;top:613.03px;font-family:'Liberation Serif', serif;font-size:20.4px;line-height:26.52px;color:#222;letter-spacing:0.532px;-webkit-text-stroke:.3px #222;">numerical models to simulate this effect for two distinct astrophysical</div>
<div class="t" id="ab6" style="left:1191.00px;top:644.11px;font-family:'Liberation Serif', serif;font-size:20.4px;line-height:26.52px;color:#222;letter-spacing:0.575px;-webkit-text-stroke:.3px #222;">scenarios: an emission-line circumstellar disk and an absorption-line</div>
<div class="t" id="ab7" style="left:1191.00px;top:675.18px;font-family:'Liberation Serif', serif;font-size:20.4px;line-height:26.52px;color:#222;letter-spacing:0.469px;-webkit-text-stroke:.3px #222;">binary system. Our simulations reveal a clear sensitivity of this</div>
<div class="t" id="ab8" style="left:1191.00px;top:706.25px;font-family:'Liberation Serif', serif;font-size:20.4px;line-height:26.52px;color:#222;letter-spacing:0.550px;-webkit-text-stroke:.3px #222;">temporal asymmetry to the system&rsquo;s inclination angle, velocity</div>
<div class="t" id="ab9" style="left:1191.00px;top:737.33px;font-family:'Liberation Serif', serif;font-size:20.4px;line-height:26.52px;color:#222;letter-spacing:0.544px;-webkit-text-stroke:.3px #222;">symmetry, and internal dynamics. This suggests that, with sufficiently</div>
<div class="t" id="ab10" style="left:1191.00px;top:768.40px;font-family:'Liberation Serif', serif;font-size:20.4px;line-height:26.52px;color:#222;letter-spacing:0.593px;-webkit-text-stroke:.3px #222;">high time resolution, II can be used to extract quantitative information</div>
<div class="t" id="ab11" style="left:1191.00px;top:799.48px;font-family:'Liberation Serif', serif;font-size:20.4px;line-height:26.52px;color:#222;letter-spacing:0.512px;-webkit-text-stroke:.3px #222;">about internal kinematics, offering a new observational window on</div>
<div class="t" id="ab12" style="left:1191.00px;top:830.56px;font-family:'Liberation Serif', serif;font-size:20.4px;line-height:26.52px;color:#222;letter-spacing:0.471px;-webkit-text-stroke:.3px #222;">stellar dynamics.</div>
</body></html>
